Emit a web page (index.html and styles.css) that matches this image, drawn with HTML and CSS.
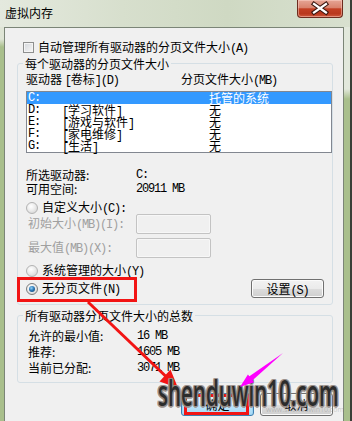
FILE: index.html
```html
<!DOCTYPE html>
<html lang="zh-CN">
<head>
<meta charset="utf-8">
<title>虚拟内存</title>
<link rel="stylesheet" href="styles.css">
</head>
<body>
<div class="window">
  <div class="titlebar">
    <span class="title">虚拟内存</span>
    <div class="close">
      <svg width="44" height="17" viewBox="0 0 44 17">
        <path d="M16 4 L28 12.5 M28 4 L16 12.5" stroke="#3b1710" stroke-width="4.4" stroke-linecap="square" fill="none"/>
        <path d="M16 4 L28 12.5 M28 4 L16 12.5" stroke="#ffffff" stroke-width="2.2" stroke-linecap="square" fill="none"/>
      </svg>
    </div>
  </div>
  <div class="frame">
    <div class="edge-left"></div>
    <div class="client">
      <div class="auto-row"><span class="checkbox"></span><span>自动管理所有驱动器的分页文件大小<span class="m">(A)</span></span></div>

      <fieldset class="group">
        <legend>每个驱动器的分页文件大小</legend>
        <div class="list-head">
          <span>驱动器 <span class="m">[</span>卷标<span class="m">](D)</span></span>
          <span>分页文件大小<span class="m">(MB)</span></span>
        </div>
        <div class="listbox">
          <div class="row sel"><span class="m">C:</span><span></span><span>托管的系统</span></div>
          <div class="row"><span class="m">D:</span><span><span class="m">[</span>学习软件<span class="m">]</span></span><span>无</span></div>
          <div class="row"><span class="m">E:</span><span><span class="m">[</span>游戏与软件<span class="m">]</span></span><span>无</span></div>
          <div class="row"><span class="m">F:</span><span><span class="m">[</span>家电维修<span class="m">]</span></span><span>无</span></div>
          <div class="row"><span class="m">G:</span><span><span class="m">[</span>生活<span class="m">]</span></span><span>无</span></div>
        </div>
        <div class="info">
          <span>所选驱动器:</span><span class="m">C:</span>
          <span>可用空间:</span><span class="m">20911 MB</span>
        </div>
        <div class="radio-row r-custom"><span class="radio"></span><span>自定义大小<span class="m">(C):</span></span></div>
        <div class="size-row"><span class="size-label">初始大小<span class="m">(MB)(I):</span></span><span class="textbox"></span></div>
        <div class="size-row"><span class="size-label">最大值<span class="m">(MB)(X):</span></span><span class="textbox"></span></div>
        <div class="radio-row r-system"><span class="radio"></span><span>系统管理的大小<span class="m">(Y)</span></span></div>
        <div class="radio-row r-none"><span class="radio on"></span><span>无分页文件<span class="m">(N)</span></span><button class="btn set">设置<span class="m">(S)</span></button></div>
      </fieldset>

      <fieldset class="group group-total">
        <legend>所有驱动器分页文件大小的总数</legend>
        <div class="totals">
          <span>允许的最小值:</span><span class="m">16 MB</span>
          <span>推荐:</span><span class="m">1605 MB</span>
          <span>当前已分配:</span><span class="m">3071 MB</span>
        </div>
      </fieldset>

      <div class="buttons">
        <button class="btn big default">确定</button>
        <button class="btn big">取消</button>
      </div>
    </div>
    <div class="edge-right"></div>
  </div>

  <svg class="marks" width="352" height="421" viewBox="0 0 352 421">
    <rect x="18.5" y="278.5" width="117" height="22" fill="none" stroke="#f21414" stroke-width="3"/>
    <rect x="185.5" y="395.5" width="62" height="18" fill="none" stroke="#f21414" stroke-width="3"/>
    <line x1="88" y1="302" x2="166" y2="376.5" stroke="#f21414" stroke-width="3"/>
    <polygon points="178,388 159.5,381.5 170.5,369.5" fill="#f21414"/>
  </svg>
  <div class="watermark-small">www.shenduwin10.com</div>
  <div class="watermark">shenduwin10.com</div>
  <svg class="pointer" width="352" height="421" viewBox="0 0 352 421">
    <polygon points="283,353 252.6,380.3 254.1,382.2 240,387 247.9,374.4 249.4,376.3" fill="#ff00ff"/>
  </svg>
</div>
</body>
</html>
```

FILE: styles.css
```css
* { box-sizing: border-box; }
html, body { margin: 0; padding: 0; }
body {
  width: 352px;
  height: 421px;
  overflow: hidden;
  font-family: "Noto Sans CJK SC", "Noto Sans", sans-serif;
  font-size: 12px;
  color: #000;
  background: #a9bf8c;
}
.m {
  font-family: "Liberation Mono", monospace;
  font-size: 12px;
  letter-spacing: -1.2px;
}
.window {
  position: relative;
  width: 352px;
  height: 421px;
  overflow: hidden;
  border-right: 2px solid #3a3e37;
  display: flex;
  flex-direction: column;
}
.titlebar {
  height: 27px;
  flex: none;
  display: flex;
  align-items: flex-start;
  background: linear-gradient(to right, #e4e9de 0%, #d7dfcd 35%, #cfd9c3 65%, #d8e0cf 100%);
}
.title {
  margin: 7px 0 0 5px;
  line-height: 12px;
}
.close {
  margin-left: auto;
  margin-right: 7px;
  width: 46px;
  height: 18px;
  border: 1px solid #6d2c1e;
  border-top: none;
  border-radius: 0 0 4px 4px;
  background: linear-gradient(#e6a595 0%, #d9826d 45%, #c33f23 52%, #b9381d 80%, #d0593d 100%);
  box-shadow: inset 0 0 0 1px rgba(255, 220, 210, 0.45);
  display: flex;
  align-items: center;
  justify-content: center;
}
.close svg { display: block; }
.frame {
  flex: 1;
  min-height: 0;
  display: flex;
}
.edge-left {
  width: 4px;
  flex: none;
  background: linear-gradient(#dfe5d6 0, #dfe5d6 12px, #a9bf8c 20px);
}
.edge-right {
  width: 6px;
  flex: none;
  background: linear-gradient(#e2e8dc 0, #e2e8dc 62px, #a9bf8c 72px);
}
.client {
  width: 340px;
  flex: none;
  border: 1px solid #7b8577;
  border-bottom: none;
  background: #f0f0f0;
  padding: 0 10px 0 12px;
}
.auto-row {
  display: flex;
  align-items: center;
  gap: 4px;
  height: 13px;
  line-height: 13px;
  margin: 13px 0 0 6px;
}
.checkbox {
  width: 11px;
  height: 11px;
  flex: none;
  border: 1px solid #8e8f8f;
  background: linear-gradient(135deg, #d3d6db, #f7f7f7);
  box-shadow: inset 0 0 0 1px #f4f4f4;
}
.group {
  margin: 3px 0 0;
  padding: 0 0 6px 5px;
  border: 1px solid #d5dfe5;
  border-radius: 3px;
  min-width: 0;
}
.group legend {
  padding: 0 2px;
  line-height: 13px;
}
.group-total { margin-top: 4px; }
.list-head {
  display: grid;
  grid-template-columns: 155px auto;
  line-height: 12px;
  margin: 3px 0 0 3px;
}
.listbox {
  margin: 4px 0 0 3px;
  border: 1px solid #828790;
  background: #fff;
}
.row {
  display: grid;
  grid-template-columns: 34px 147px auto;
  height: 12px;
  line-height: 12px;
  padding-left: 1px;
  white-space: nowrap;
}
.row.sel {
  background: #3399ff;
  color: #fff;
}
.info {
  display: grid;
  grid-template-columns: 110px auto;
  line-height: 14px;
  margin: 15px 0 0 3px;
}
.radio-row {
  display: flex;
  align-items: center;
  gap: 4px;
  height: 12px;
  line-height: 12px;
  margin-left: 3px;
}
.r-custom { margin-top: 6px; }
.r-system { margin-top: 7px; }
.r-none { margin-top: 2px; height: 19px; }
.radio {
  width: 12px;
  height: 12px;
  flex: none;
  border-radius: 50%;
  border: 1px solid #b3b3b3;
  background: radial-gradient(circle at 40% 35%, #ffffff 0, #ececec 45%, #cdcdcd 100%);
  display: grid;
  place-items: center;
}
.radio.on { border-color: #7c7c7c; }
.radio.on::after {
  content: "";
  width: 6px;
  height: 6px;
  border-radius: 50%;
  background: radial-gradient(circle at 40% 35%, #93d3f6 0, #2d79b9 45%, #0c3965 100%);
}
.size-row {
  display: flex;
  align-items: center;
  height: 20px;
  margin-left: 5px;
}
.size-row + .size-row { margin-top: 4px; }
.size-label {
  width: 108px;
  flex: none;
  color: #a0a0a0;
  line-height: 12px;
}
.textbox {
  width: 75px;
  height: 20px;
  border: 1px solid #c3c3c3;
  border-radius: 2px;
  background: #f0f0f0;
  box-shadow: inset 0 0 0 1px #f7f7f7;
}
.btn {
  font: inherit;
  color: #000;
  width: 73px;
  height: 19px;
  padding: 0;
  line-height: 17px;
  border: 1px solid #707070;
  border-radius: 3px;
  background: linear-gradient(#f2f2f2 0, #ebebeb 50%, #dddddd 50%, #cfcfcf 100%);
  box-shadow: inset 0 0 0 1px #fbfbfb;
}
.set {
  margin-left: auto;
  margin-right: 8px;
}
.totals {
  display: grid;
  grid-template-columns: 109px auto;
  grid-auto-rows: 16px;
  align-items: center;
  line-height: 12px;
  margin: 6px 0 0 5px;
}
.buttons {
  display: flex;
  justify-content: flex-end;
  gap: 6px;
  margin-top: 10px;
}
.btn.big { height: 23px; line-height: 21px; }
.btn.default {
  border-color: #3c7fb1;
  background: linear-gradient(#eaf6fd 0, #d9f0fc 50%, #bee6fd 50%, #a7d9f5 100%);
  box-shadow: inset 0 0 0 1px #9bd3f3;
}
.marks, .pointer {
  position: absolute;
  left: 0;
  top: 0;
  pointer-events: none;
}
.watermark-small {
  position: absolute;
  left: 266px;
  top: 406px;
  font-family: "Open Sans", sans-serif;
  font-size: 7px;
  line-height: 8px;
  color: rgba(120, 120, 120, 0.35);
  white-space: nowrap;
}
.watermark {
  position: absolute;
  left: 158px;
  top: 375px;
  font-family: "Open Sans", sans-serif;
  font-size: 36px;
  font-weight: 600;
  line-height: 36px;
  color: #2c2c2c;
  white-space: nowrap;
  transform: scaleX(0.57);
  transform-origin: 0 0;
  text-shadow:
    2.5px 0 0 rgba(150, 140, 135, 0.8),
    -2.5px 0 0 rgba(150, 140, 135, 0.8),
    0 1.5px 0 rgba(150, 140, 135, 0.8),
    0 -1.5px 0 rgba(150, 140, 135, 0.8),
    2px 1px 0 rgba(150, 140, 135, 0.8),
    -2px -1px 0 rgba(150, 140, 135, 0.8),
    2px -1px 0 rgba(150, 140, 135, 0.8),
    -2px 1px 0 rgba(150, 140, 135, 0.8);
}
```
